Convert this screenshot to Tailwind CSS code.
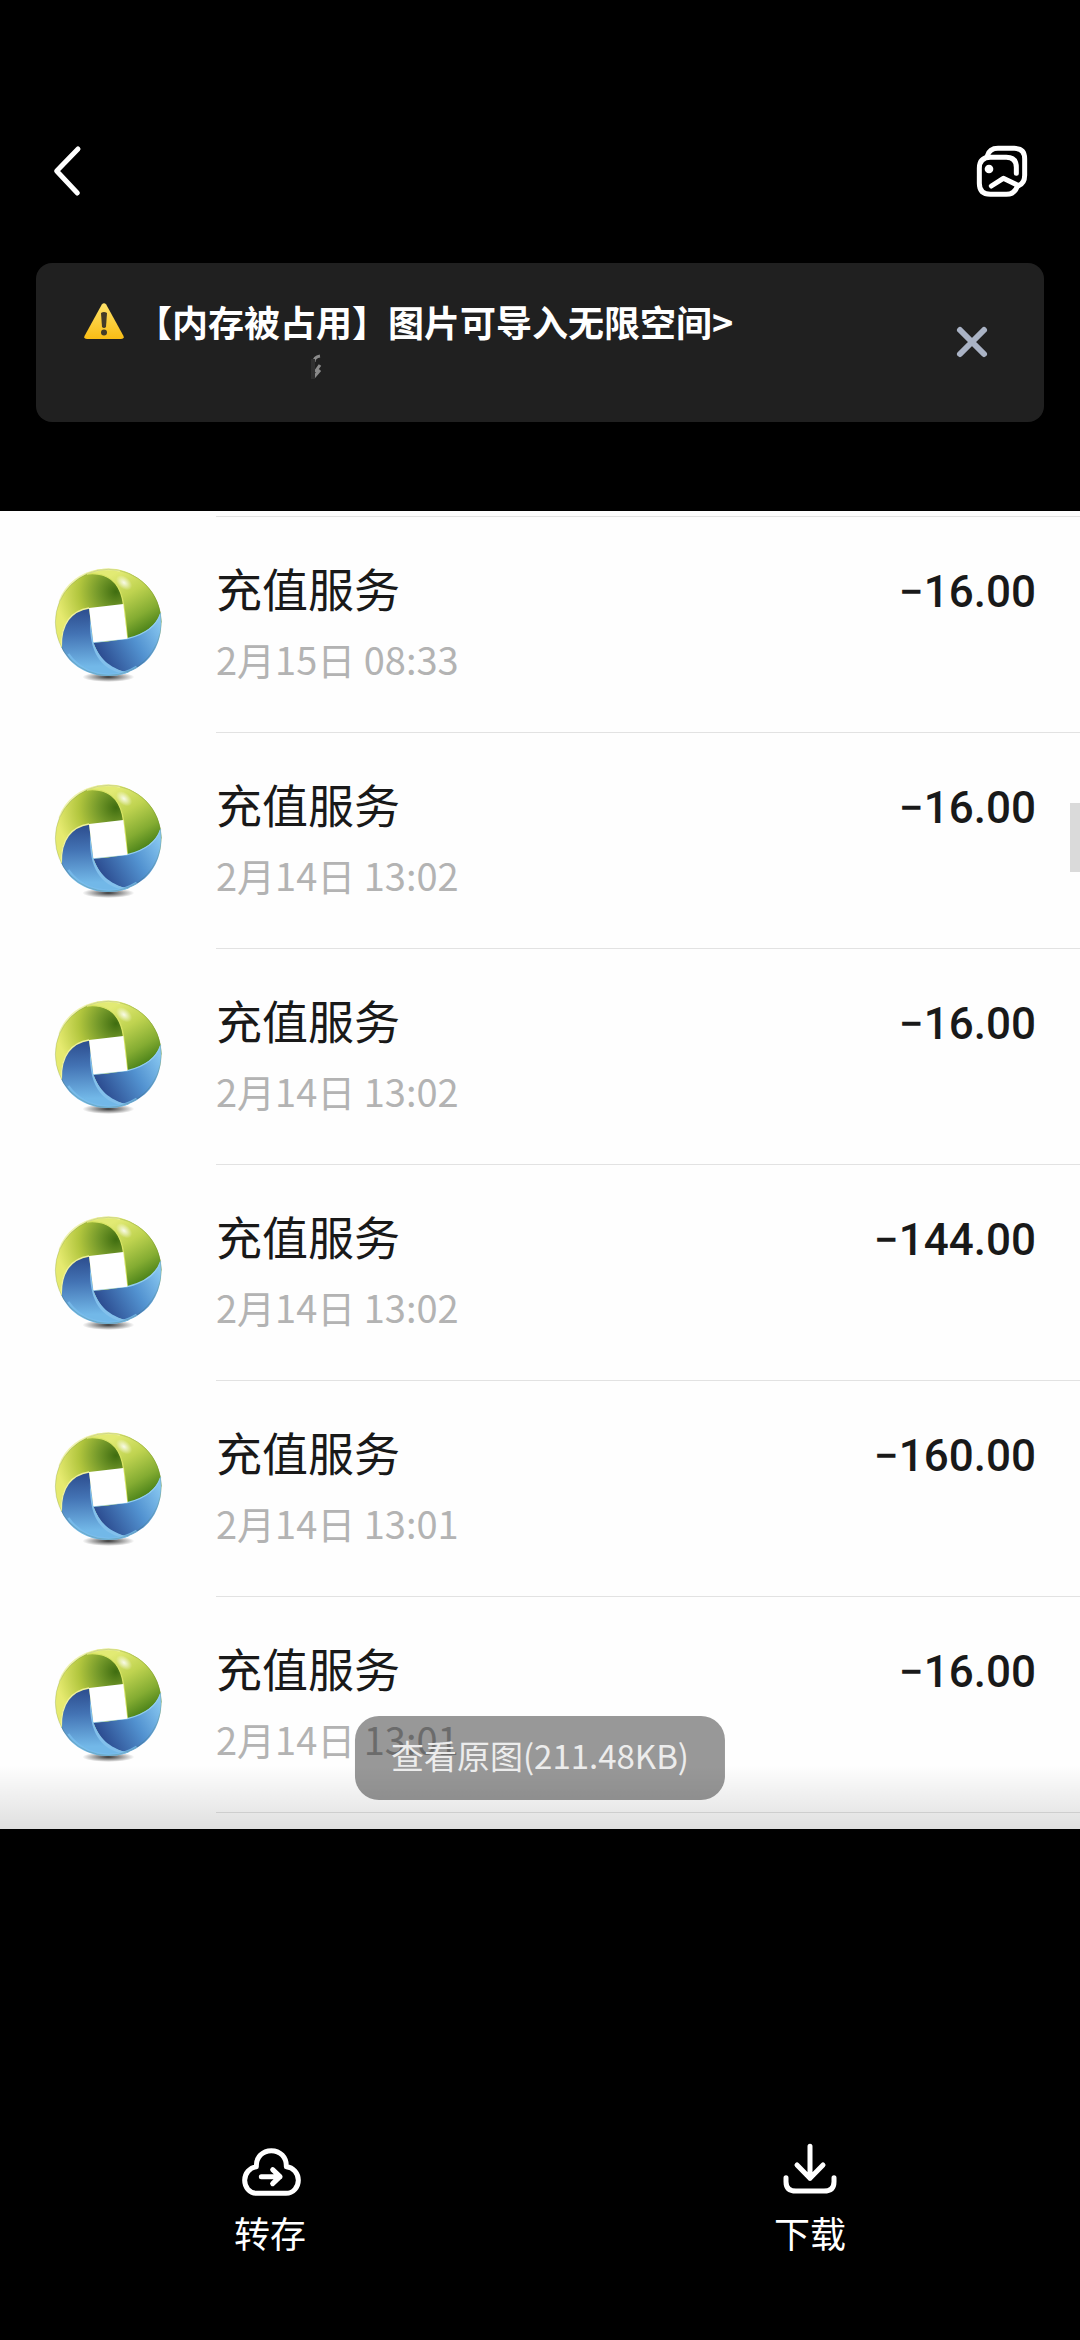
<!DOCTYPE html>
<html lang="zh-CN">
<head>
    <meta charset="UTF-8">
    <meta name="viewport" content="width=device-width, initial-scale=1.0">
    <title>图片预览</title>
    <script src="https://cdn.jsdelivr.net/npm/@tailwindcss/browser@4"></script>
</head>
<body class="bg-black text-white min-h-screen flex flex-col font-['Noto_Sans_CJK_SC',sans-serif]">

    <!-- Top bar -->
    <header class="flex justify-between px-[30px] pt-[120px]">
        <button type="button" aria-label="返回">
            <svg class="block size-[100px]" viewBox="0 0 300 300" fill="none" stroke="currentColor" stroke-width="15" stroke-linecap="round" stroke-linejoin="round">
                <path d="M144 87L80 153l62 66"/>
            </svg>
        </button>
        <button type="button" aria-label="相册">
            <svg class="block size-[100px]" viewBox="0 0 300 300" fill="none" stroke="currentColor" stroke-width="15" stroke-linecap="round" stroke-linejoin="round">
                <path d="M199 160v-18q0-30-30-30h-48q-33 0-33 33v45q0 33 33 33h48q24 0 33-24"/>
                <path d="M112 108q6-23 32-23h49q31 0 31 31v50q0 24-18 31l-46-22-36 23" />
                <circle cx="117" cy="147" r="13" fill="currentColor" stroke="none"/>
            </svg>
        </button>
    </header>

    <!-- Storage notice -->
    <section class="mx-9 mt-[43px] h-[159px] rounded-2xl bg-[#202020] flex items-center justify-between pl-12 pr-[50px]">
        <div class="pt-1">
            <a href="#" class="flex items-center text-4xl/[40px] font-bold">
                <svg class="w-10 h-9 mr-3" viewBox="0 0 40 36">
                    <defs>
                        <linearGradient id="warn" x1="0" y1="0" x2="0" y2="1">
                            <stop offset="0" stop-color="#ffe36a"/>
                            <stop offset="1" stop-color="#f9bd14"/>
                        </linearGradient>
                    </defs>
                    <path d="M17.800 1.500Q20-1 22.200 1.500L39.500 33Q40.500 36 37 36H3Q-.5 36 .5 33Z" fill="url(#warn)"/>
                    <path d="M17 10q3-2 6 0l-1 14q-2 2-4 0Z" fill="#443c28"/>
                    <circle cx="20" cy="29.500" r="3" fill="#443c28"/>
                </svg>
                <span>【内存被占用】图片可导入无限空间&gt;</span>
            </a>
            <svg class="block w-60 h-10 mt-2" viewBox="0 0 240 40" fill="none">
                <path d="M236 7q-6 1-6 6m6 3l-5 7m5-2l-6 7" stroke="#8a8a8a" stroke-width="3"/>
                <path d="M229 10v20" stroke="#303030" stroke-width="4"/>
            </svg>
        </div>
        <button type="button" aria-label="关闭">
            <svg class="block size-11" viewBox="0 0 44 44" fill="none" stroke="#aab3c5" stroke-width="6" stroke-linecap="round">
                <path d="M10 9l24 24M34 9L10 33"/>
            </svg>
        </button>
    </section>

    <!-- Opened picture: bill list -->
    <main class="relative mt-[89px] bg-[#fefefe] text-[#191919] pt-[5px]">
        <svg class="absolute size-0" aria-hidden="true">
            <defs>
                <radialGradient id="lime" gradientUnits="userSpaceOnUse" cx="228" cy="125" r="180">
                    <stop offset="0" stop-color="#3f6d10"/>
                    <stop offset=".3" stop-color="#74992a"/>
                    <stop offset=".62" stop-color="#b2c63e"/>
                    <stop offset="1" stop-color="#e6ea70"/>
                </radialGradient>
                <linearGradient id="leaf" gradientUnits="userSpaceOnUse" x1="225" y1="70" x2="330" y2="250">
                    <stop offset="0" stop-color="#e2ea74"/>
                    <stop offset=".35" stop-color="#bfd350"/>
                    <stop offset=".7" stop-color="#84ac32"/>
                    <stop offset="1" stop-color="#3f7a14"/>
                </linearGradient>
                <linearGradient id="navy" gradientUnits="userSpaceOnUse" x1="125" y1="185" x2="130" y2="350">
                    <stop offset="0" stop-color="#2f5192"/>
                    <stop offset=".4" stop-color="#4373b4"/>
                    <stop offset="1" stop-color="#72b8e8"/>
                </linearGradient>
                <linearGradient id="sky" gradientUnits="userSpaceOnUse" x1="360" y1="220" x2="185" y2="320">
                    <stop offset="0" stop-color="#86c6f0"/>
                    <stop offset=".45" stop-color="#5292d0"/>
                    <stop offset="1" stop-color="#2d4e92"/>
                </linearGradient>
                <radialGradient id="glow">
                    <stop offset="0" stop-color="#fff" stop-opacity=".85"/>
                    <stop offset="1" stop-color="#fff" stop-opacity="0"/>
                </radialGradient>
                <radialGradient id="shade">
                    <stop offset="0" stop-color="#222" stop-opacity=".9"/>
                    <stop offset="1" stop-color="#222" stop-opacity="0"/>
                </radialGradient>
                <symbol id="logo" viewBox="0 0 420 450">
                    <ellipse cx="205" cy="381" rx="78" ry="15" fill="url(#shade)"/>
                    <circle cx="205" cy="217" r="159" fill="url(#lime)"/>
                    <path d="M58 155C78 100 125 68 175 60" fill="none" stroke="#e9ee8a" stroke-width="5" opacity=".7"/>
                    <path d="M140 72C185 48 245 50 290 82C335 110 364 160 364 217C345 243 310 258 262 266C257 220 256 180 247 145C236 100 205 65 140 72Z" fill="url(#leaf)"/>
                    <path d="M140 72C205 65 236 100 247 145C255 180 257 220 262 266" fill="none" stroke="#d8e464" stroke-width="4"/>
                    <path d="M140 71Q190 51 240 63" fill="none" stroke="#f0f2a0" stroke-width="5"/>
                    <ellipse cx="252" cy="98" rx="28" ry="18" transform="rotate(40 252 98)" fill="url(#glow)"/>
                    <path d="M147 174C95 182 62 220 64 292C90 350 150 380 205 378C232 377 250 374 268 366C210 365 172 335 160 277Z" fill="url(#navy)"/>
                    <path d="M64 292C62 220 95 182 147 174" fill="none" stroke="#eff29a" stroke-width="4"/>
                    <path d="M362 187C372 260 345 320 298 349C285 358 275 362 262 367C215 360 180 335 160 277C205 277 235 268 262 266C318 252 350 225 362 187Z" fill="url(#sky)"/>
                    <path d="M362 190C350 227 318 252 262 266Q215 270 160 277" fill="none" stroke="#92cdf2" stroke-width="4"/>
                    <path d="M150 205C148 285 165 350 245 371L262 368C205 352 178 325 160 277Z" fill="#82c0ec"/>
                    <path d="M85 312Q125 370 205 374Q250 375 290 350" fill="none" stroke="#79bdec" stroke-width="7" opacity=".8"/>
                    <path d="M147 174L250 162L262 266L160 277Z" fill="#fff"/>
                    <circle cx="205" cy="217" r="159" fill="none" stroke="#45682b" stroke-width="2" opacity=".3"/>
                </symbol>
            </defs>
        </svg>

        <ul>
            <li class="flex h-[216px] pl-10">
                <svg class="w-[140px] h-[150px] mt-[34px] mr-9"><use href="#logo"/></svg>
                <div class="flex-1 flex justify-between border-t border-[#e2e2e2] pr-11 pt-9">
                    <div>
                        <p class="text-[46px]/[68px]">充值服务</p>
                        <p class="mt-2 text-[38px]/[60px] text-[#b3b3b3]">2月15日 08:33</p>
                    </div>
                    <p class="font-[Roboto] font-medium text-[44px]/[78px]">−16.00</p>
                </div>
            </li>
            <li class="flex h-[216px] pl-10">
                <svg class="w-[140px] h-[150px] mt-[34px] mr-9"><use href="#logo"/></svg>
                <div class="flex-1 flex justify-between border-t border-[#e2e2e2] pr-11 pt-9">
                    <div>
                        <p class="text-[46px]/[68px]">充值服务</p>
                        <p class="mt-2 text-[38px]/[60px] text-[#b3b3b3]">2月14日 13:02</p>
                    </div>
                    <p class="font-[Roboto] font-medium text-[44px]/[78px]">−16.00</p>
                </div>
            </li>
            <li class="flex h-[216px] pl-10">
                <svg class="w-[140px] h-[150px] mt-[34px] mr-9"><use href="#logo"/></svg>
                <div class="flex-1 flex justify-between border-t border-[#e2e2e2] pr-11 pt-9">
                    <div>
                        <p class="text-[46px]/[68px]">充值服务</p>
                        <p class="mt-2 text-[38px]/[60px] text-[#b3b3b3]">2月14日 13:02</p>
                    </div>
                    <p class="font-[Roboto] font-medium text-[44px]/[78px]">−16.00</p>
                </div>
            </li>
            <li class="flex h-[216px] pl-10">
                <svg class="w-[140px] h-[150px] mt-[34px] mr-9"><use href="#logo"/></svg>
                <div class="flex-1 flex justify-between border-t border-[#e2e2e2] pr-11 pt-9">
                    <div>
                        <p class="text-[46px]/[68px]">充值服务</p>
                        <p class="mt-2 text-[38px]/[60px] text-[#b3b3b3]">2月14日 13:02</p>
                    </div>
                    <p class="font-[Roboto] font-medium text-[44px]/[78px]">−144.00</p>
                </div>
            </li>
            <li class="flex h-[216px] pl-10">
                <svg class="w-[140px] h-[150px] mt-[34px] mr-9"><use href="#logo"/></svg>
                <div class="flex-1 flex justify-between border-t border-[#e2e2e2] pr-11 pt-9">
                    <div>
                        <p class="text-[46px]/[68px]">充值服务</p>
                        <p class="mt-2 text-[38px]/[60px] text-[#b3b3b3]">2月14日 13:01</p>
                    </div>
                    <p class="font-[Roboto] font-medium text-[44px]/[78px]">−160.00</p>
                </div>
            </li>
            <li class="flex h-[216px] pl-10">
                <svg class="w-[140px] h-[150px] mt-[34px] mr-9"><use href="#logo"/></svg>
                <div class="flex-1 flex justify-between border-t border-[#e2e2e2] pr-11 pt-9">
                    <div>
                        <p class="text-[46px]/[68px]">充值服务</p>
                        <p class="mt-2 text-[38px]/[60px] text-[#b3b3b3]">2月14日 13:01</p>
                    </div>
                    <p class="font-[Roboto] font-medium text-[44px]/[78px]">−16.00</p>
                </div>
            </li>
        </ul>
        <div class="ml-[216px] h-[17px] border-t border-[#e2e2e2]"></div>

        <!-- Scroll thumb, bottom shade and the original-size button float over the picture -->
        <div class="absolute right-0 top-[292px] w-[10px] h-[69px] bg-[#dadada]"></div>
        <div class="absolute inset-x-0 bottom-0 h-16 bg-linear-to-b from-black/0 to-black/12"></div>
        <button type="button" class="absolute bottom-[29px] left-1/2 -translate-x-1/2 h-[84px] px-9 pb-1 rounded-3xl bg-black/40 text-[33px] text-[#ececec] whitespace-nowrap">查看原图(211.48KB)</button>
    </main>

    <!-- Actions -->
    <footer class="mt-auto pb-[88px] flex text-4xl/[40px]">
        <button type="button" class="flex-1 flex flex-col items-center">
            <svg class="w-[140px] h-[92px]" viewBox="0 0 420 276" fill="none" stroke="currentColor" stroke-width="15" stroke-linecap="round" stroke-linejoin="round">
                <path d="M170 220C148 220 134 201 134 181C134 160 149 143 169 140C168 111 188 92 214 92C240 92 260 111 259 140C280 142 295 160 295 181C295 201 280 220 258 220Z"/>
                <path d="M184 170h56M218 149l22 21-22 21"/>
            </svg>
            转存
        </button>
        <button type="button" class="flex-1 flex flex-col items-center">
            <svg class="w-[140px] h-[92px]" viewBox="0 0 420 276" fill="none" stroke="currentColor" stroke-width="15" stroke-linecap="round" stroke-linejoin="round">
                <path d="M210 79v96M171 135l39 40 39-40"/>
                <path d="M138 173v12q0 28 30 28h84q30 0 30-28v-12"/>
            </svg>
            下载
        </button>
    </footer>

</body>
</html>
